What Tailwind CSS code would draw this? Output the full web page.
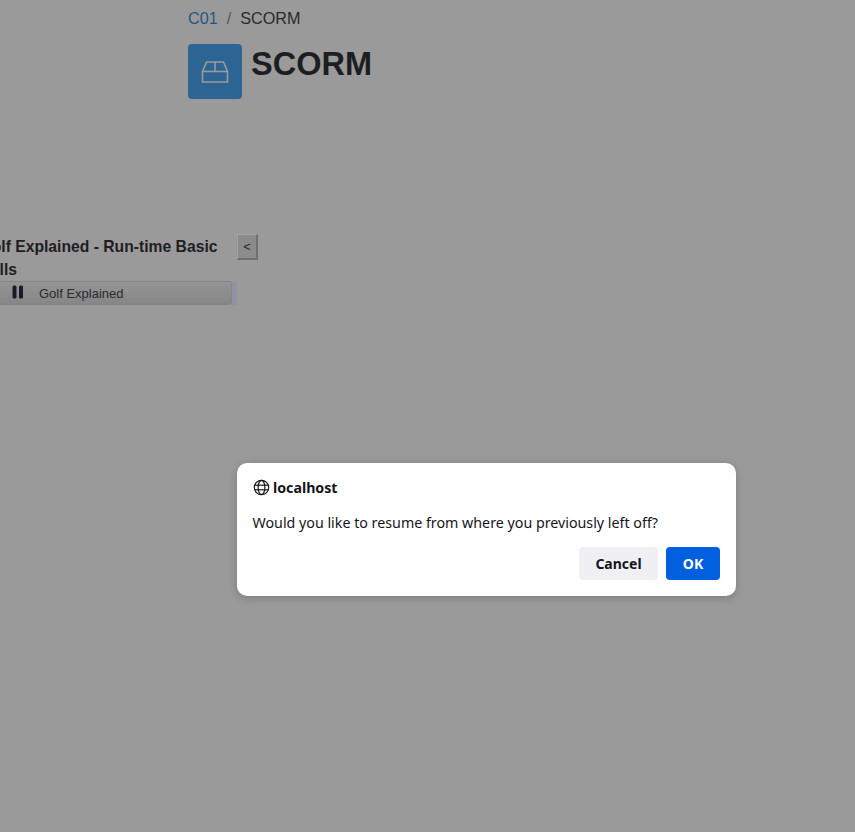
<!DOCTYPE html>
<html lang="en">
<head>
    <meta charset="UTF-8">
    <title>SCORM</title>
    <script src="https://cdn.jsdelivr.net/npm/@tailwindcss/browser@4"></script>
</head>
<body class="bg-[#9a9a9b] font-['Liberation_Sans',sans-serif] h-[832px] w-[855px] overflow-hidden relative">
    <!-- Page content, already dimmed -->
    <div class="pl-[188px] pt-[9px]">
        <div class="flex items-center text-[16.2px] leading-[19px] text-[#2a2a2e]">
            <span class="text-[#265580]">C01</span>
            <span class="mx-[9px] text-[#55555a]">/</span>
            <span>SCORM</span>
        </div>
        <div class="flex mt-[16px]">
            <div class="w-[54px] h-[55px] rounded-[4px] bg-[#2c6593] flex items-center justify-center">
                <svg width="28" height="24" viewBox="0 0 28 24" fill="none" stroke="#9a9a9b" stroke-width="1.6">
                    <path d="M1.5 11.5 L5.5 2 H22.5 L26.5 11.5 V22 H1.5 Z"/>
                    <path d="M1.5 11.5 H26.5"/>
                    <path d="M14 2 V11.5"/>
                </svg>
            </div>
            <h1 class="ml-[9px] text-[32.5px] leading-[40px] font-bold text-[#1e1e22]">SCORM</h1>
        </div>
    </div>

    <!-- SCORM player -->
    <div class="flex mt-[135px] -ml-[3px]">
        <div class="w-[240px]">
            <div class="-ml-[17.5px] text-[15.7px] leading-[23px] font-bold text-[#1e1e22] mt-[1px] whitespace-nowrap">
                <div>Golf Explained - Run-time Basic</div>
                <div>Calls</div>
            </div>
            <div class="flex h-[24px] w-[240px] bg-[#9093a3]">
                <div class="w-[235px] h-[24px] rounded-[3px] border border-[#858587] bg-gradient-to-b from-[#959596] to-[#868687] flex items-center text-[13px] text-[#2a2a2e]">
                    <svg class="ml-[14px] -mt-[3px]" width="12" height="14" viewBox="0 0 12 14" fill="#1a1a2a">
                        <rect x="0.5" y="0.5" width="4" height="13" rx="1.5"/>
                        <rect x="7" y="0.5" width="4" height="13" rx="1.5"/>
                    </svg>
                    <span class="ml-[15px] pt-[1px]">Golf Explained</span>
                </div>
            </div>
        </div>
        <button class="w-[21px] h-[26px] bg-[#8b8b8c] border-r-2 border-b-2 border-t border-l border-[#6f6f70] border-t-[#a3a3a4] border-l-[#a3a3a4] text-[13px] text-[#2a2a2e] flex items-center justify-center">&lt;</button>
    </div>

    <!-- Browser confirm dialog -->
    <div class="absolute left-[237px] top-[463px] w-[499px] h-[133px] bg-white rounded-[10px] shadow-[0_2px_8px_rgba(0,0,0,0.2)] font-['Noto_Sans',sans-serif] text-[#15141a]">
        <div class="flex items-center pl-[16px] pt-[15px]">
            <svg class="-mt-[2px]" width="17" height="17" viewBox="0 0 17 17" fill="none" stroke="#15141a" stroke-width="1.2">
                <circle cx="8.5" cy="8.5" r="7.2"/>
                <ellipse cx="8.5" cy="8.5" rx="3.4" ry="7.2"/>
                <path d="M1.6 6.2 H15.4"/>
                <path d="M1.6 10.8 H15.4"/>
            </svg>
            <span class="ml-[3px] text-[14.2px] leading-[20px] font-bold">localhost</span>
        </div>
        <p class="pl-[15.5px] mt-[15px] text-[14.25px] leading-[20px] whitespace-nowrap">Would you like to resume from where you previously left off?</p>
        <div class="flex justify-end gap-[8px] pr-[16px] mt-[14px]">
            <button class="w-[79px] h-[33px] rounded-[4px] bg-[#f0f0f4] text-[14px] font-bold">Cancel</button>
            <button class="w-[54px] h-[33px] rounded-[4px] bg-[#0060df] text-white text-[14px] font-bold">OK</button>
        </div>
    </div>
</body>
</html>
